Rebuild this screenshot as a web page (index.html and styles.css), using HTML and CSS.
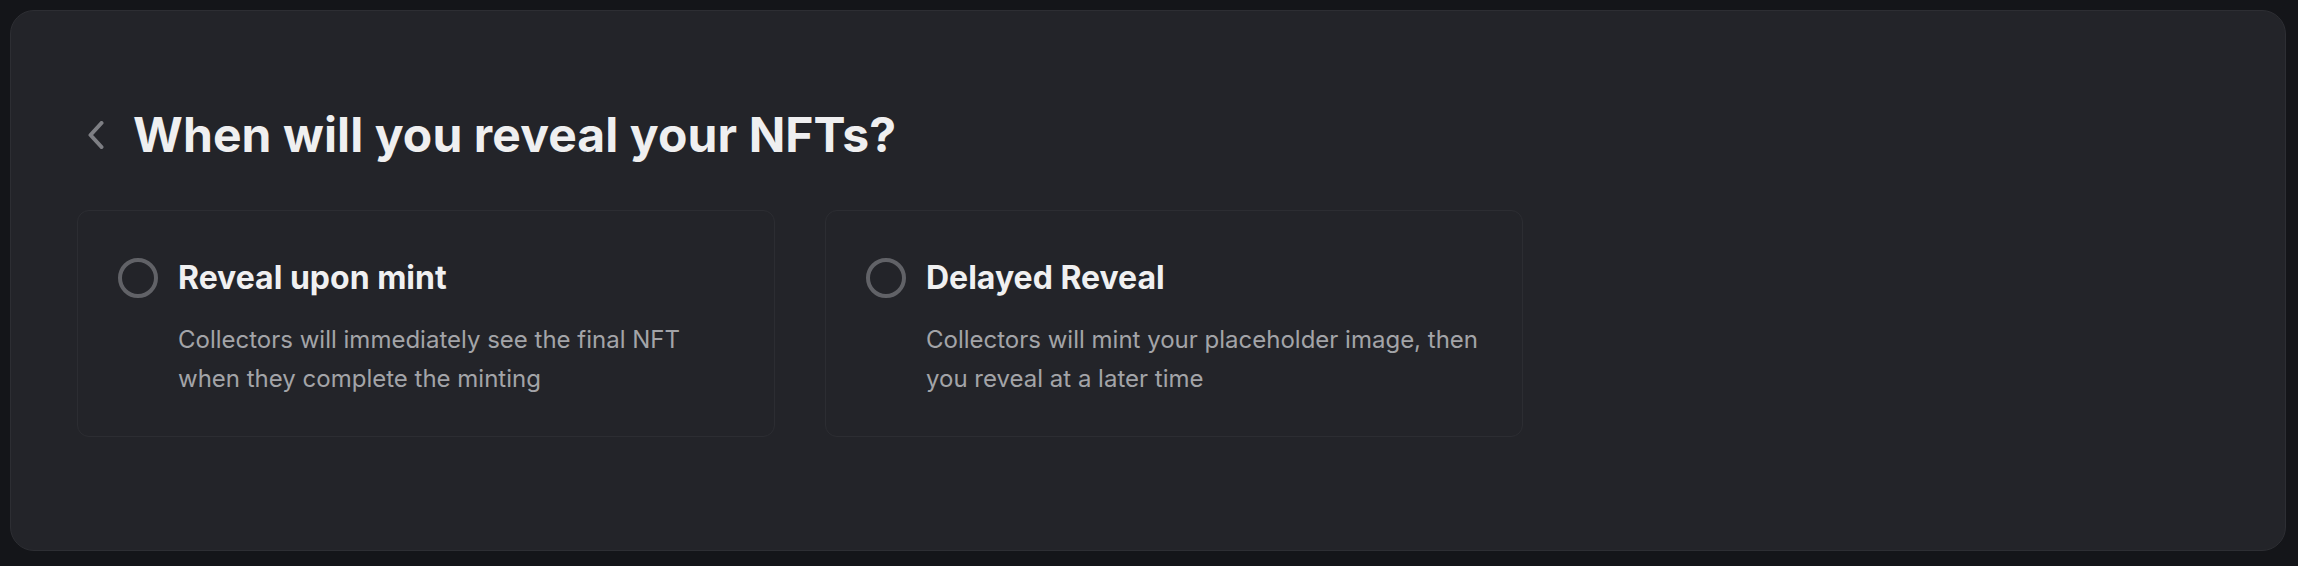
FILE: index.html
```html
<!DOCTYPE html>
<html lang="en">
<head>
<meta charset="utf-8">
<title>Reveal</title>
<link rel="stylesheet" href="styles.css">
</head>
<body>
<main class="panel">
  <div class="heading-row">
    <button class="back" type="button" aria-label="Back">
      <svg width="18" height="28" viewBox="0 0 18 28" fill="none">
        <path d="M13.5 2 L2.5 14 L13.5 26" stroke="#7e7f84" stroke-width="4" stroke-linecap="round" stroke-linejoin="round"/>
      </svg>
    </button>
    <h1 class="title">When will you reveal your NFTs?</h1>
  </div>
  <div class="options">
    <div class="option">
      <div class="option-head">
        <span class="radio"></span>
        <span class="option-title">Reveal upon mint</span>
      </div>
      <p class="option-desc">Collectors will immediately see the final NFT when they complete the minting</p>
    </div>
    <div class="option">
      <div class="option-head">
        <span class="radio"></span>
        <span class="option-title">Delayed Reveal</span>
      </div>
      <p class="option-desc">Collectors will mint your placeholder image, then you reveal at a later time</p>
    </div>
  </div>
</main>
</body>
</html>
```
FILE: styles.css
```css
* { box-sizing: border-box; }
html, body { margin: 0; padding: 0; }
body {
  background: #141519;
  font-family: Inter, "Noto Sans", sans-serif;
  padding: 10px 12px 15px 10px;
  height: 566px;
}
.panel {
  height: 541px;
  background: #232429;
  border: 1px solid #2d2e33;
  border-radius: 24px;
  padding: 95px 66px 0 66px;
}
.heading-row {
  display: flex;
  align-items: center;
  gap: 16px;
}
.back {
  width: 40px;
  height: 40px;
  padding: 0;
  border: 0;
  background: transparent;
  display: flex;
  align-items: center;
  justify-content: center;
}
.title {
  margin: 0;
  font-size: 48px;
  line-height: 58px;
  font-weight: 700;
  color: #efeff0;
  letter-spacing: 0.1px;
}
.options {
  display: flex;
  gap: 50px;
  margin-top: 46px;
}
.option {
  width: 698px;
  border: 1px solid #2c2d32;
  border-radius: 12px;
  padding: 46px 40px 38px 40px;
}
.option-head {
  display: flex;
  align-items: center;
  gap: 20px;
}
.radio {
  width: 40px;
  height: 40px;
  border-radius: 50%;
  border: 4px solid #616267;
  flex: none;
}
.option-title {
  font-size: 32px;
  line-height: 40px;
  font-weight: 700;
  color: #f0f0f1;
  padding-top: 1px;
}
.option-desc {
  margin: 22px 0 0 60px;
  font-size: 24px;
  line-height: 39px;
  color: #a3a4a8;
}
```
